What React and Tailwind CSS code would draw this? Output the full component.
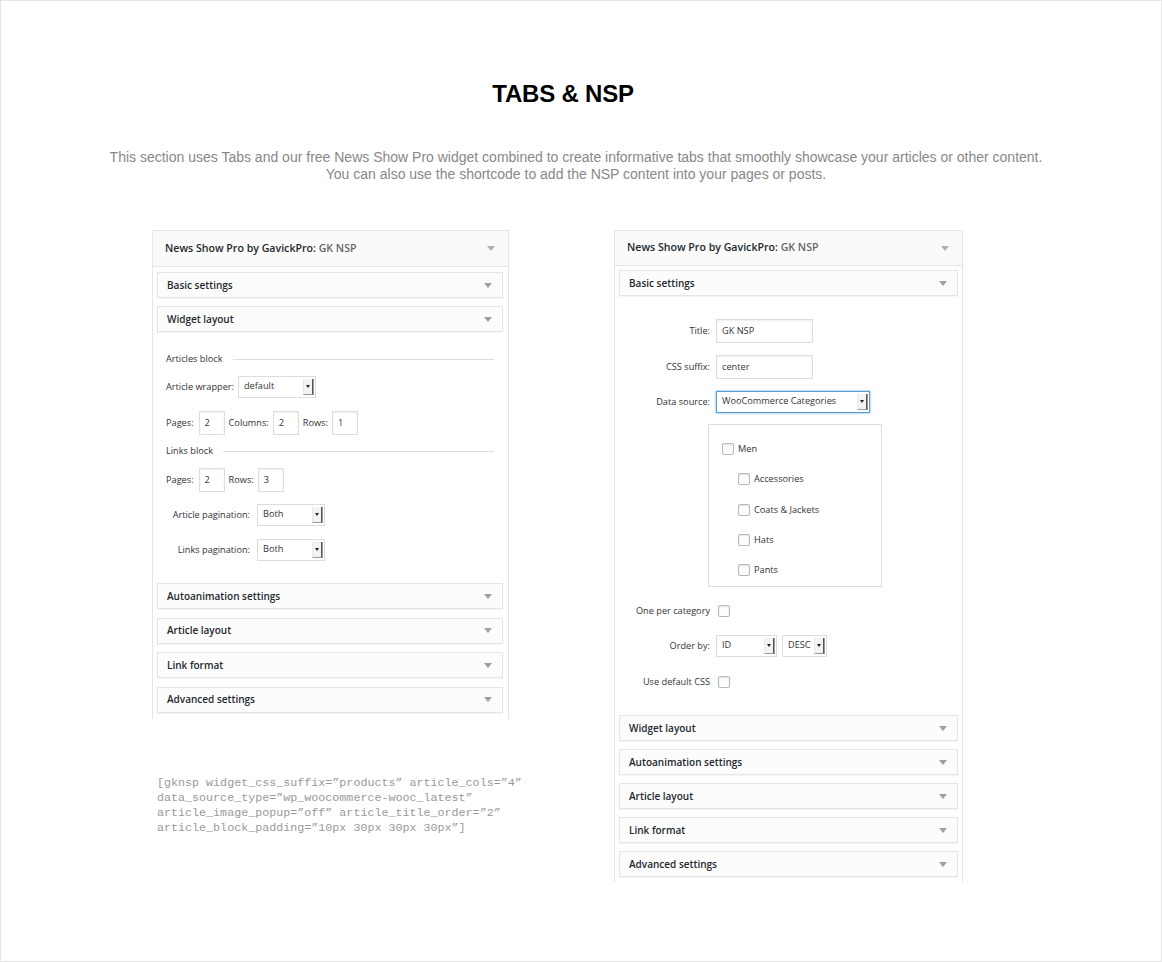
const panelFont = { fontFamily: '"Open Sans", "Liberation Sans", sans-serif' }

function Arrow({ color = 'border-t-[#a0a0a0]' }) {
  return <span className={`w-0 h-0 border-l-[4px] border-r-[4px] border-t-[5px] border-l-transparent border-r-transparent ${color}`} />
}

function Bar({ label }) {
  return (
    <div className="h-[26px] flex items-center justify-between pl-[9px] pr-[10px] border border-[#e5e5e5] bg-[#fcfcfc] shadow-[0_1px_1px_rgba(0,0,0,0.04)]">
      <span className="text-[10px] font-semibold text-[#23282d]">{label}</span>
      <Arrow />
    </div>
  )
}

function PanelHeader({ height }) {
  return (
    <div className={`${height} flex items-center justify-between pl-[12px] pr-[13px] bg-[#fafafa] border-b border-[#e5e5e5]`}>
      <span className="text-[10.6px] font-semibold text-[#23282d]">
        News Show Pro by GavickPro: <span className="text-[#666]">GK NSP</span>
      </span>
      <Arrow color="border-t-[#b0b0b0]" />
    </div>
  )
}

function Input({ value, width = 'w-[26px]' }) {
  return (
    <span className={`${width} h-[24px] flex items-center px-[5px] border border-[#ddd] bg-white shadow-[inset_0_1px_2px_rgba(0,0,0,0.07)] text-[9.2px] text-[#333]`}>
      {value}
    </span>
  )
}

function Select({ value, width, focus }) {
  return (
    <span
      className={`${width} h-[22px] flex items-start justify-between pl-[5px] pr-[2px] pt-[3px] bg-white text-[9.2px] text-[#333] ${
        focus ? 'border border-[#5b9dd9] shadow-[0_0_2px_rgba(30,140,190,0.8)]' : 'border border-[#ddd]'
      }`}
    >
      <span className="leading-[12px]">{value}</span>
      <span className="w-[10px] h-[16px] -mt-[1px] flex items-center justify-center bg-[#f3f3f3] border-l border-l-[#e8e8e8] border-r border-r-[#555] border-b border-b-[#999] shadow-[1px_0_0_#999]">
        <span className="w-0 h-0 border-l-[2.5px] border-r-[2.5px] border-t-[3px] border-l-transparent border-r-transparent border-t-[#222]" />
      </span>
    </span>
  )
}

function Checkbox() {
  return <span className="w-[12px] h-[12px] shrink-0 rounded-[2px] border border-[#b4b9be] bg-[#fdfdfd] shadow-[inset_0_1px_2px_rgba(0,0,0,0.1)]" />
}

function BlockTitle({ label }) {
  return (
    <div className="h-[16px] flex items-center gap-[10px]">
      <span className="text-[9.2px] text-[#333]">{label}</span>
      <span className="flex-1 h-px bg-[#dedede]" />
    </div>
  )
}

function LeftPanel() {
  return (
    <div className="w-[357px] border border-b-0 border-[#e5e5e5] bg-white" style={panelFont}>
      <PanelHeader height="h-[36px]" />
      <div className="pl-[4px] pr-[5px] pt-[5px] pb-[6px]">
        <Bar label="Basic settings" />
        <div className="mt-[8px]">
          <Bar label="Widget layout" />
        </div>
        <div className="pl-[9px] pr-[9px] pt-[19px] text-[9.2px] text-[#333]">
          <BlockTitle label="Articles block" />
          <div className="mt-[9px] h-[22px] flex items-center gap-[4px]">
            <span>Article wrapper:</span>
            <Select value="default" width="w-[78px]" />
          </div>
          <div className="mt-[13px] h-[24px] flex items-center gap-[4px]">
            <span className="mr-[1px]">Pages:</span>
            <Input value="2" />
            <span>Columns:</span>
            <Input value="2" />
            <span>Rows:</span>
            <Input value="1" />
          </div>
          <div className="mt-[8px]">
            <BlockTitle label="Links block" />
          </div>
          <div className="mt-[9px] h-[24px] flex items-center gap-[4px]">
            <span className="mr-[1px]">Pages:</span>
            <Input value="2" />
            <span>Rows:</span>
            <Input value="3" />
          </div>
          <div className="mt-[11px] h-[23px] flex items-center gap-[7px]">
            <span className="w-[84px] text-right">Article pagination:</span>
            <Select value="Both" width="w-[68px]" />
          </div>
          <div className="mt-[12px] h-[23px] flex items-center gap-[7px]">
            <span className="w-[84px] text-right">Links pagination:</span>
            <Select value="Both" width="w-[68px]" />
          </div>
        </div>
        <div className="mt-[22px] flex flex-col gap-[8.5px]">
          <Bar label="Autoanimation settings" />
          <Bar label="Article layout" />
          <Bar label="Link format" />
          <Bar label="Advanced settings" />
        </div>
      </div>
    </div>
  )
}

function FormRow({ label, children, className = '' }) {
  return (
    <div className={`flex items-center gap-[6px] ${className}`}>
      <span className="w-[91px] text-right">{label}</span>
      {children}
    </div>
  )
}

const categories = [
  { label: 'Men', sub: false },
  { label: 'Accessories', sub: true },
  { label: 'Coats & Jackets', sub: true },
  { label: 'Hats', sub: true },
  { label: 'Pants', sub: true },
]

function RightPanel() {
  return (
    <div className="w-[349px] border border-b-0 border-[#e5e5e5] bg-white" style={panelFont}>
      <PanelHeader height="h-[35px]" />
      <div className="px-[4px] pt-[4px] pb-[5px]">
        <Bar label="Basic settings" />
        <div className="pt-[23px] text-[9.2px] text-[#333]">
          <FormRow label="Title:" className="h-[24px]">
            <Input value="GK NSP" width="w-[97px]" />
          </FormRow>
          <FormRow label="CSS suffix:" className="mt-[12px] h-[24px]">
            <Input value="center" width="w-[97px]" />
          </FormRow>
          <FormRow label="Data source:" className="mt-[12px] h-[22px]">
            <Select value="WooCommerce Categories" width="w-[154px]" focus />
          </FormRow>
          <div className="mt-[11px] ml-[89px] w-[174px] h-[163px] border border-[#ddd] pt-[16px] pl-[13px] flex flex-col gap-[14.25px]">
            {categories.map((c) => (
              <div key={c.label} className={`h-[16px] flex items-center gap-[4px] ${c.sub ? 'pl-[16px]' : ''}`}>
                <Checkbox />
                <span>{c.label}</span>
              </div>
            ))}
          </div>
          <FormRow label="One per category" className="mt-[16px] h-[16px]">
            <span className="ml-[2px] flex"><Checkbox /></span>
          </FormRow>
          <FormRow label="Order by:" className="mt-[16px] h-[22px]">
            <Select value="ID" width="w-[61px]" />
            <span className="-ml-[1px] flex"><Select value="DESC" width="w-[45px]" /></span>
          </FormRow>
          <FormRow label="Use default CSS" className="mt-[17px] h-[16px]">
            <span className="ml-[2px] flex"><Checkbox /></span>
          </FormRow>
        </div>
        <div className="mt-[25px] flex flex-col gap-[8px]">
          <Bar label="Widget layout" />
          <Bar label="Autoanimation settings" />
          <Bar label="Article layout" />
          <Bar label="Link format" />
          <Bar label="Advanced settings" />
        </div>
      </div>
    </div>
  )
}

export default function App() {
  return (
    <div className="w-[1162px] h-[962px] border border-[#e5e5e5] bg-white" style={{ fontFamily: '"Liberation Sans", Arial, sans-serif' }}>
      <h1 className="pt-[79px] pr-[36px] text-center text-[24px] leading-[28px] font-bold text-black tracking-[-0.2px]">TABS &amp; NSP</h1>
      <p className="mt-[41px] pr-[10px] text-center text-[14px] leading-[17px] text-[#888]">
        This section uses Tabs and our free News Show Pro widget combined to create informative tabs that smoothly showcase your articles or other content.
        <br />
        You can also use the shortcode to add the NSP content into your pages or posts.
      </p>
      <div className="mt-[47px] pl-[151px] flex items-start">
        <div className="w-[357px]">
          <LeftPanel />
          <pre className="mt-[57px] ml-[5px] text-[11.7px] leading-[15px] text-[#999]" style={{ fontFamily: '"Liberation Mono", "Courier New", monospace' }}>
{`[gknsp widget_css_suffix=”products” article_cols=”4”
data_source_type=”wp_woocommerce-wooc_latest”
article_image_popup=”off” article_title_order=”2”
article_block_padding=”10px 30px 30px 30px”]`}
          </pre>
        </div>
        <div className="ml-[105px]">
          <RightPanel />
        </div>
      </div>
    </div>
  )
}
